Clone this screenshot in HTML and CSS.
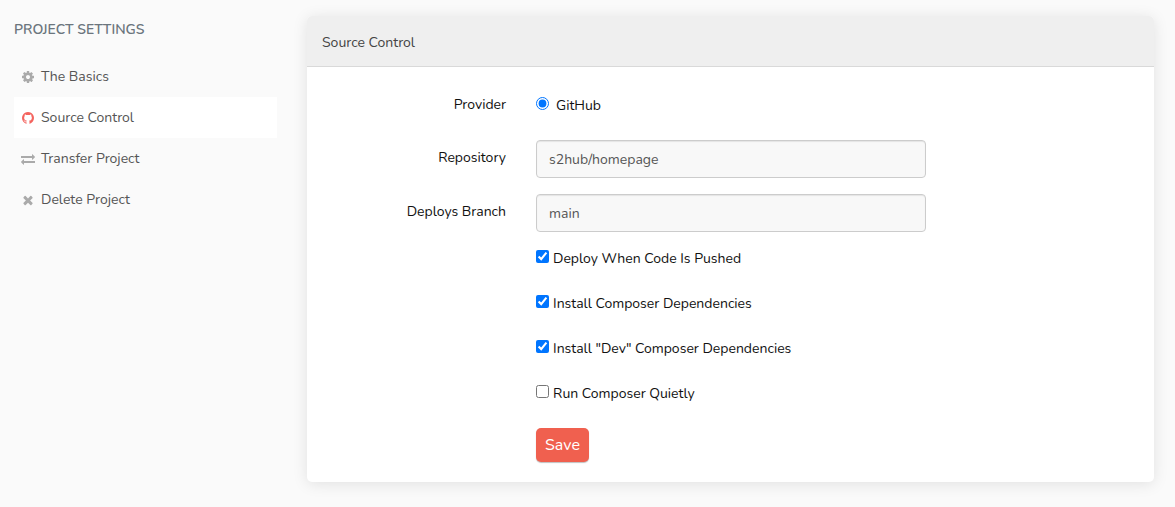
FILE: index.html
```html
<!DOCTYPE html>
<html lang="en">
<head>
<meta charset="utf-8">
<meta name="viewport" content="width=device-width, initial-scale=1">
<title>Project Settings</title>
<link rel="stylesheet" href="styles.css">
</head>
<body>
<div class="layout">
  <aside class="sidebar">
    <h1 class="sidebar-title">Project Settings</h1>
    <nav class="menu">
      <a class="menu-link" href="#basics"><svg class="icon" viewBox="-128 0 1792 1792" aria-hidden="true"><path d="M1024 896q0-106-75-181t-181-75-181 75-75 181 75 181 181 75 181-75 75-181zm512-109v222q0 12-8 23t-20 13l-185 28q-19 54-39 91 35 50 107 138 10 12 10 25t-9 23q-27 37-99 108t-94 71q-12 0-26-9l-138-108q-44 23-91 38-16 136-29 186-7 28-36 28h-222q-14 0-24.500-8.500t-11.500-21.500l-28-184q-49-16-90-37l-141 107q-10 9-25 9-14 0-25-11-126-114-165-168-7-10-7-23 0-12 8-23 15-21 51-66.500t54-70.500q-27-50-41-99l-183-27q-13-2-21-12.500t-8-23.500v-222q0-12 8-23t19-13l186-28q14-46 39-92-40-57-107-138-10-12-10-24 0-10 9-23 26-36 98.500-107.500t94.500-71.500q13 0 26 10l138 107q44-23 91-38 16-136 29-186 7-28 36-28h222q14 0 24.500 8.500t11.500 21.500l28 184q49 16 90 37l142-107q9-9 24-9 13 0 25 10 129 119 165 170 7 8 7 22 0 12-8 23-15 21-51 66.500t-54 70.500q26 50 41 98l183 28q13 2 21 12.500t8 23.500z"/></svg>The Basics</a>
      <a class="menu-link active" href="#source" aria-current="page"><svg class="icon" viewBox="-128 0 1792 1792" aria-hidden="true"><path d="M768 128q209 0 385.500 103t279.500 279.500 103 385.500q0 251-146.500 451.500t-378.500 277.500q-27 5-40-7t-13-30q0-3 .5-76.500t.5-134.500q0-97-52-142 57-6 102.500-18t94-39 81-66.500 53-105 20.500-150.500q0-119-79-206 37-91-8-204-28-9-81 11t-92 44l-38 24q-93-26-192-26t-192 26q-16-11-42.500-27t-83.500-38.500-85-13.500q-45 113-8 204-79 87-79 206 0 85 20.500 150t52.500 105 80.500 67 94 39 102.500 18q-39 36-49 103-21 10-45 15t-57 5-65.500-21.500-55.500-62.500q-19-32-48.500-52t-49.500-24l-20-3q-21 0-29 4.500t-5 11.500 9 14 13 12l7 5q22 10 43.500 38t31.500 51l10 23q13 38 44 61.500t67 30 69.500 7 55.500-3.500l23-4q0 38 .5 88.500t.5 54.500q0 18-13 30t-40 7q-232-77-378.500-277.500t-146.500-451.500q0-209 103-385.500t279.500-279.500 385.500-103z"/></svg>Source Control</a>
      <a class="menu-link" href="#transfer"><svg class="icon" viewBox="0 0 1792 1792" aria-hidden="true"><path d="M1792 1184v192q0 13-9.500 22.500t-22.500 9.500h-1376v192q0 13-9.500 22.500t-22.500 9.500q-12 0-24-10l-319-320q-9-9-9-22 0-14 9-23l320-320q9-9 23-9 13 0 22.500 9.500t9.500 22.500v192h1376q13 0 22.500 9.500t9.500 22.500zm0-544q0 14-9 23l-320 320q-9 9-23 9-13 0-22.500-9.500t-9.500-22.500v-192h-1376q-13 0-22.500-9.500t-9.500-22.500v-192q0-13 9.500-22.500t22.500-9.500h1376v-192q0-14 9-23t23-9q12 0 24 10l319 319q9 9 9 23z"/></svg>Transfer Project</a>
      <a class="menu-link" href="#delete"><svg class="icon" viewBox="-192 0 1792 1792" aria-hidden="true"><path d="M1298 1322q0 40-28 68l-136 136q-28 28-68 28t-68-28l-294-294-294 294q-28 28-68 28t-68-28l-136-136q-28-28-28-68t28-68l294-294-294-294q-28-28-28-68t28-68l136-136q28-28 68-28t68 28l294 294 294-294q28-28 68-28t68 28l136 136q28 28 28 68t-28 68l-294 294 294 294q28 28 28 68z"/></svg>Delete Project</a>
    </nav>
  </aside>
  <main class="card">
    <h2 class="card-header">Source Control</h2>
    <form class="form">
      <span class="label" id="provider-label">Provider</span>
      <div class="field" role="radiogroup" aria-labelledby="provider-label">
        <label class="choice radio"><input type="radio" name="provider" checked>GitHub</label>
      </div>
      <label class="label" for="repository">Repository</label>
      <input class="field text-input" id="repository" type="text" value="s2hub/homepage">
      <label class="label" for="branch">Deploys Branch</label>
      <input class="field text-input" id="branch" type="text" value="main">
      <div class="field options">
        <label class="choice"><input type="checkbox" checked>Deploy When Code Is Pushed</label>
        <label class="choice"><input type="checkbox" checked>Install Composer Dependencies</label>
        <label class="choice"><input type="checkbox" checked>Install "Dev" Composer Dependencies</label>
        <label class="choice"><input type="checkbox">Run Composer Quietly</label>
      </div>
      <div class="field"><button class="save" type="submit">Save</button></div>
    </form>
  </main>
</div>
</body>
</html>
```
FILE: styles.css
```css
* { box-sizing: border-box; }

body {
  margin: 0;
  background: #fafafa;
  color: #111;
  font-family: Nunito, Lato, sans-serif;
  font-size: 14px;
  line-height: 21px;
}

.layout {
  display: grid;
  grid-template-columns: 263fr 847fr;
  gap: 30px;
  align-items: start;
  padding: 16px 21px 24px 14px;
}

.sidebar-title {
  margin: 3px 0 16px;
  color: #6b757d;
  font-size: 14px;
  font-weight: 600;
  text-transform: uppercase;
}

.menu { display: grid; }

.menu-link {
  display: flex;
  align-items: center;
  gap: 6px;
  height: 41px;
  padding: 0 7px;
  color: #555;
  text-decoration: none;
}

.menu-link.active { background: #fff; }

.icon {
  width: 14px;
  height: 14px;
  fill: #aaa;
}

.active .icon { fill: #f4645f; }

.card {
  overflow: hidden;
  border-radius: 5px;
  background: #fff;
  box-shadow: 0 2px 15px rgba(0, 0, 0, 0.1);
}

.card-header {
  margin: 0;
  padding: 16px 15px 13px;
  border-bottom: 1px solid #d9d9d9;
  background: #efefef;
  color: #444;
  font-size: 14px;
  font-weight: 400;
}

.form {
  display: grid;
  grid-template-columns: 23.5% 46%;
  gap: 16px 30px;
  padding: 20px 0;
}

.label {
  padding-top: 7px;
  text-align: right;
}

.field { grid-column: 2; }

.text-input {
  width: 100%;
  height: 38px;
  padding: 0 12px;
  border: 1px solid #ccc;
  border-radius: 4px;
  background: #f8f8f8;
  box-shadow: inset 0 1px 1px rgba(0, 0, 0, 0.08);
  color: #555;
  font: inherit;
}

.choice {
  display: flex;
  align-items: center;
  gap: 4px;
  height: 21px;
}

.choice input {
  width: 13px;
  height: 13px;
  margin: 0 0 4px;
  accent-color: #0075ff;
}

.radio {
  gap: 7px;
  height: 37px;
}

.options {
  display: grid;
  gap: 24px;
  padding-bottom: 8px;
}

.save {
  display: block;
  height: 34px;
  padding: 0 9px;
  border: 0;
  border-radius: 5px;
  background: #f0604f;
  box-shadow: 0 1px 1px rgba(0, 0, 0, 0.25);
  color: #fff;
  font: inherit;
  font-size: 16px;
}
```
